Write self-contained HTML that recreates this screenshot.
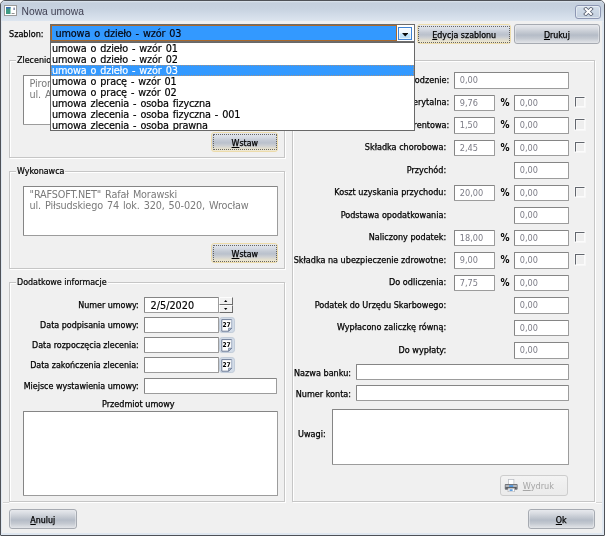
<!DOCTYPE html>
<html lang="pl">
<head>
<meta charset="utf-8">
<title>Nowa umowa</title>
<style>
*{box-sizing:border-box;margin:0;padding:0}
html,body{width:605px;height:536px;overflow:hidden;background:#fff}
body{filter:blur(.35px);position:relative;font-family:"DejaVu Sans Condensed","Liberation Sans",sans-serif;font-size:9px;color:#000}
.abs{position:absolute}
#win{position:absolute;left:0;top:0;width:605px;height:536px;background:#dfe7f0;border:1px solid #4e5157;border-width:1px 1.5px 1.8px 1.2px;border-radius:5px 5px 1px 1px;overflow:hidden}
#client{position:absolute;left:1.4px;top:19.6px;width:599.9px;height:512.4px;background:#f0f0f0}
#title{position:absolute;left:0;top:0;width:603px;height:21px;background:linear-gradient(#dde5ee 0,#c4cfdd 9%,#c8d3e1 40%,#d3dde9 70%,#dbe4ee 92%,#e9eef4 100%)}
#title .txt{position:absolute;left:20.5px;top:3.8px;font-family:"Liberation Sans",sans-serif;font-size:10.3px;color:#3e3e50;line-height:13px}
#close{position:absolute;left:573.5px;top:3.5px;width:26px;height:14px;border:1px solid #8d97b3;border-radius:3px;background:linear-gradient(#d3deea,#c3cfdf);box-shadow:inset 0 0 0 1px rgba(255,255,255,.45)}
.lbl{position:absolute;white-space:nowrap;line-height:12px;height:12px;font-size:9px;-webkit-text-stroke:.25px #000}
.r{text-align:right}
.inp{position:absolute;background:#fff;border:1px solid #8a8a8a;border-color:#858585 #9c9c9c #9c9c9c #858585;border-radius:1px;white-space:nowrap;overflow:hidden}
.val{font-family:"DejaVu Sans Condensed","Liberation Sans",sans-serif;font-size:9.1px;color:#7c7c86;line-height:15.6px;padding-left:4.8px}
.ver{font-family:"DejaVu Sans","Liberation Sans",sans-serif;font-size:9.7px;letter-spacing:-.16px;word-spacing:1.1px}
.grp{position:absolute;border:1px solid #c6c6c6;box-shadow:1px 1px 0 #fff, inset 1px 1px 0 #fff}
.grp>.cap{position:absolute;left:6px;top:-7px;background:#f0f0f0;padding:0 1px;line-height:12px;font-size:8.9px;white-space:nowrap;-webkit-text-stroke:.2px #000}
.btn{position:absolute;border:1px solid #a6aab1;border-radius:3px;background:linear-gradient(#e7e9ed 0,#d9dce2 18%,#c6cbd3 38%,#b5bcc7 56%,#c4c9d1 75%,#d9dce1 92%,#e3e5e9 100%);box-shadow:inset 1px 0 0 rgba(255,255,255,.35),inset -1px 0 0 rgba(255,255,255,.35);text-align:center;font-size:8.8px;line-height:20.4px;white-space:nowrap;color:#000;-webkit-text-stroke:.25px #000}
.btn.foc{border:1.4px solid #eddcab;box-shadow:none;background:linear-gradient(#e4e7ec 0,#d8dde5 22%,#c3c9d3 42%,#bac1cc 55%,#cfd1d3 72%,#e9e3cd 90%,#f0ead5 100%)}
.btn.foc:after{content:"";position:absolute;left:.6px;top:.6px;right:.6px;bottom:.6px;border:1px dotted #505050;opacity:.85;border-radius:1px}
.btn u{text-decoration:underline}
.btn.dis{color:#a6a6a6;-webkit-text-stroke:0;border-color:#cdcdcd;box-shadow:none;background:linear-gradient(#f3f3f3,#eeeeee 50%,#ebebeb);text-align:left}
.chk{position:absolute;width:10.4px;height:10.4px;background:#eeeeee;border:1.2px solid;border-color:#62666d #fbfbfb #fbfbfb #62666d;box-shadow:0 0 0 .8px #f9f9f9, inset 1px 1px 0 #f6f6f6}
.sb{background:#f1f1f1;border:1.2px solid;border-color:#fdfdfd #6c6c6c #6c6c6c #fdfdfd}
.cal{position:absolute;width:15.6px;height:15.6px;border-radius:3.2px;background:#d3dce8;border:1px solid #c2ccd9}
.pct{position:absolute;font-weight:bold;font-size:10px;line-height:12px}
#list{position:absolute;left:50px;top:41.6px;width:365px;height:89.6px;padding-top:.6px;background:#fff;border:1px solid #686868;z-index:10;overflow:hidden}
#list div{height:11px;line-height:12.4px;padding-left:1px;font-family:"DejaVu Sans","Liberation Sans",sans-serif;font-size:9.7px;letter-spacing:-.16px;word-spacing:1.1px;color:#000;white-space:nowrap;-webkit-text-stroke:.18px #000}
#list div.sel{position:relative;z-index:0;color:#fff;-webkit-text-stroke:.18px #fff}
#list div.sel:before{content:"";position:absolute;z-index:-1;left:0;right:0;top:.1px;height:10.4px;background:#3399ff;outline:1px dotted rgba(201,143,92,.75);outline-offset:-1px}
</style>
</head>
<body>
<div id="win">
<div id="title"><span class="txt">Nowa umowa</span></div>
<svg class="abs" style="left:3px;top:4px" width="13" height="11" viewBox="0 0 13 11"><rect x=".5" y=".5" width="12" height="10" fill="#fff" stroke="#9a9a9a"/><rect x="2" y="2" width="4.5" height="7" fill="#3f9a84"/><rect x="2" y="2" width="4.5" height="1.5" fill="#3b6fb5"/><rect x="9.6" y="2.6" width="1" height="2.4" fill="#3a4a7a"/><rect x="7.6" y="8" width="3" height=".8" fill="#777"/></svg>
<div id="close"><svg class="abs" style="left:7.3px;top:1.1px" width="11" height="9" viewBox="0 0 11 9"><path d="M2.8 2 L8 7 M8 2 L2.8 7" stroke="#596071" stroke-width="3.7" stroke-linecap="square"/><path d="M2.8 2 L8 7 M8 2 L2.8 7" stroke="#fff" stroke-width="2.1" stroke-linecap="square"/></svg></div>
<div id="client"></div>
</div>

<!-- top row -->
<div class="lbl" style="left:9px;top:27.7px">Szablon:</div>
<div class="abs" id="combo" style="left:49.8px;top:24.2px;width:365px;height:18px;border:1px solid #6c6c6c;background:#fff">
  <div class="abs ver" style="left:0;top:0;width:346.4px;height:16px;background:#3399ff;border:1.3px solid #a9682c;line-height:15.4px;padding-left:3.8px;color:#05050f;-webkit-text-stroke:.18px #05050f">umowa o dzieło - wzór 03</div>
  <div class="abs" style="left:347.2px;top:1.6px;width:14.4px;height:13.2px;border:1px solid #3f82d2;background:linear-gradient(#f6fbff 0,#eef7fe 45%,#c4e4fa 55%,#b9dff9 100%);box-shadow:inset 0 0 0 1px rgba(255,255,255,.6)"><svg class="abs" style="left:3.1px;top:5.6px" width="6.4" height="3.6" viewBox="0 0 7 4"><path d="M0 0h7L3.5 4z" fill="#0a0a0a"/></svg></div>
</div>
<div class="btn foc" style="left:416.9px;top:24.2px;width:94.6px;height:20px"><u>E</u>dycja szablonu</div>
<div class="btn" style="left:514.1px;top:24.2px;width:85.6px;height:20.2px"><u>D</u>rukuj</div>

<div id="list">
<div>umowa o dzieło - wzór 01</div>
<div>umowa o dzieło - wzór 02</div>
<div class="sel">umowa o dzieło - wzór 03</div>
<div>umowa o pracę - wzór 01</div>
<div>umowa o pracę - wzór 02</div>
<div>umowa zlecenia - osoba fizyczna</div>
<div>umowa zlecenia - osoba fizyczna - 001</div>
<div>umowa zlecenia - osoba prawna</div>
</div>

<!-- left groups -->
<div class="grp" style="left:9px;top:60px;width:276px;height:98px"><span class="cap">Zleceniodawca</span></div>
<div class="inp ver" style="left:23px;top:75px;width:255px;height:50px;color:#7a7a7a;line-height:11px;padding:2.3px 5.6px">Pironex Sp. z o.o.<br>ul. Akacjowa 12, 50-001, Wrocław</div>
<div class="btn foc" style="left:211.4px;top:132px;width:66.8px;height:20px"><u>W</u>staw</div>

<div class="grp" style="left:9px;top:171px;width:276px;height:98px"><span class="cap">Wykonawca</span></div>
<div class="inp ver" style="left:23px;top:186px;width:255px;height:50px;color:#7a7a7a;line-height:11px;padding:2.3px 5.6px">"RAFSOFT.NET" Rafał Morawski<br>ul. Piłsudskiego 74 lok. 320, 50-020, Wrocław</div>
<div class="btn foc" style="left:211.4px;top:243.3px;width:66.8px;height:20px"><u>W</u>staw</div>

<div class="grp" style="left:9px;top:282.4px;width:276px;height:219.6px"><span class="cap">Dodatkowe informacje</span></div>
<div class="lbl r" style="font-size:8.9px;left:9px;width:129.8px;top:299px">Numer umowy:</div>
<div class="inp ver" style="left:144px;top:297.3px;width:75px;height:16px;line-height:14px;padding-top:1.2px;padding-left:5.6px;color:#000;letter-spacing:0;-webkit-text-stroke:.15px #000">2/5/2020</div>
<div class="abs" id="spin" style="left:219.1px;top:297.3px;width:13.6px;height:16px">
  <div class="abs sb" style="left:0;top:0;width:13.6px;height:7.5px"><svg class="abs" style="left:4.2px;top:2px" width="3.4" height="2.2" viewBox="0 0 4 2.4"><path d="M0 2.4h4L2 0z" fill="#000"/></svg></div>
  <div class="abs sb" style="left:0;top:7.5px;width:13.6px;height:8.6px"><svg class="abs" style="left:4.2px;top:2.6px" width="3.4" height="2.2" viewBox="0 0 4 2.4"><path d="M0 0h4L2 2.4z" fill="#000"/></svg></div>
</div>
<div class="lbl r" style="font-size:8.9px;left:9px;width:129.8px;top:319px">Data podpisania umowy:</div>
<div class="inp" style="left:144px;top:317px;width:75px;height:16px"></div>
<div class="cal" style="left:219.1px;top:317.4px"><svg class="abs" style="left:1.2px;top:1px" width="12" height="13" viewBox="0 0 12 13"><path d="M.8.6H10.6V9.2L7.6 12.2H.8z" fill="#fff" stroke="#62718c" stroke-width=".9"/><path d="M10.6 9.2H7.6V12.2z" fill="#b9c4d6" stroke="#62718c" stroke-width=".7"/><path d="M10.4.8V9" stroke="#c9d2df" stroke-width=".8"/><text x="5.6" y="7.6" text-anchor="middle" font-family="DejaVu Sans Condensed,Liberation Sans,sans-serif" font-weight="bold" font-size="6.6" fill="#000">27</text></svg></div>
<div class="lbl r" style="font-size:8.9px;left:9px;width:129.8px;top:339px">Data rozpoczęcia zlecenia:</div>
<div class="inp" style="left:144px;top:337px;width:75px;height:16px"></div>
<div class="cal" style="left:219.1px;top:337.4px"><svg class="abs" style="left:1.2px;top:1px" width="12" height="13" viewBox="0 0 12 13"><path d="M.8.6H10.6V9.2L7.6 12.2H.8z" fill="#fff" stroke="#62718c" stroke-width=".9"/><path d="M10.6 9.2H7.6V12.2z" fill="#b9c4d6" stroke="#62718c" stroke-width=".7"/><path d="M10.4.8V9" stroke="#c9d2df" stroke-width=".8"/><text x="5.6" y="7.6" text-anchor="middle" font-family="DejaVu Sans Condensed,Liberation Sans,sans-serif" font-weight="bold" font-size="6.6" fill="#000">27</text></svg></div>
<div class="lbl r" style="font-size:8.9px;left:9px;width:129.8px;top:359px">Data zakończenia zlecenia:</div>
<div class="inp" style="left:144px;top:357px;width:75px;height:16px"></div>
<div class="cal" style="left:219.1px;top:357.4px"><svg class="abs" style="left:1.2px;top:1px" width="12" height="13" viewBox="0 0 12 13"><path d="M.8.6H10.6V9.2L7.6 12.2H.8z" fill="#fff" stroke="#62718c" stroke-width=".9"/><path d="M10.6 9.2H7.6V12.2z" fill="#b9c4d6" stroke="#62718c" stroke-width=".7"/><path d="M10.4.8V9" stroke="#c9d2df" stroke-width=".8"/><text x="5.6" y="7.6" text-anchor="middle" font-family="DejaVu Sans Condensed,Liberation Sans,sans-serif" font-weight="bold" font-size="6.6" fill="#000">27</text></svg></div>
<div class="lbl r" style="font-size:8.9px;left:9px;width:129.8px;top:380px">Miejsce wystawienia umowy:</div>
<div class="inp" style="left:144px;top:378px;width:133px;height:16px"></div>
<div class="lbl" style="left:102px;top:398px">Przedmiot umowy</div>
<div class="inp" style="left:22.5px;top:411px;width:255.5px;height:84.6px"></div>

<!-- right group -->
<div class="grp" style="left:292px;top:60px;width:303.2px;height:442px"></div>
<!--rows-->
<div class="lbl r" style="left:292px;width:157.3px;top:73.7px">Wynagrodzenie:</div>
<div class="inp val" style="left:454px;top:72.4px;width:115px;height:16.4px">0,00</div>
<div class="lbl r" style="left:292px;width:157.3px;top:96.2px">Składka emerytalna:</div>
<div class="inp val" style="left:454px;top:94.9px;width:41px;height:16.4px">9,76</div>
<div class="pct" style="left:500.6px;top:96.5px">%</div>
<div class="inp val" style="left:514px;top:94.9px;width:55px;height:16.4px">0,00</div>
<div class="chk" style="left:574.8px;top:96.7px"></div>
<div class="lbl r" style="left:292px;width:157.3px;top:118.7px">Składka rentowa:</div>
<div class="inp val" style="left:454px;top:117.4px;width:41px;height:16.4px">1,50</div>
<div class="pct" style="left:500.6px;top:119.0px">%</div>
<div class="inp val" style="left:514px;top:117.4px;width:55px;height:16.4px">0,00</div>
<div class="chk" style="left:574.8px;top:119.2px"></div>
<div class="lbl r" style="left:292px;width:154.2px;top:141.2px">Składka chorobowa:</div>
<div class="inp val" style="left:454px;top:139.9px;width:41px;height:16.4px">2,45</div>
<div class="pct" style="left:500.6px;top:141.5px">%</div>
<div class="inp val" style="left:514px;top:139.9px;width:55px;height:16.4px">0,00</div>
<div class="chk" style="left:574.8px;top:141.7px"></div>
<div class="lbl r" style="left:292px;width:154.2px;top:163.7px">Przychód:</div>
<div class="inp val" style="left:514px;top:162.4px;width:55px;height:16.4px">0,00</div>
<div class="lbl r" style="left:292px;width:154.2px;top:186.2px">Koszt uzyskania przychodu:</div>
<div class="inp val" style="left:454px;top:184.9px;width:41px;height:16.4px">20,00</div>
<div class="pct" style="left:500.6px;top:186.5px">%</div>
<div class="inp val" style="left:514px;top:184.9px;width:55px;height:16.4px">0,00</div>
<div class="chk" style="left:574.8px;top:186.7px"></div>
<div class="lbl r" style="left:292px;width:154.2px;top:208.7px">Podstawa opodatkowania:</div>
<div class="inp val" style="left:514px;top:207.4px;width:55px;height:16.4px">0,00</div>
<div class="lbl r" style="left:292px;width:154.2px;top:231.2px">Naliczony podatek:</div>
<div class="inp val" style="left:454px;top:229.9px;width:41px;height:16.4px">18,00</div>
<div class="pct" style="left:500.6px;top:231.5px">%</div>
<div class="inp val" style="left:514px;top:229.9px;width:55px;height:16.4px">0,00</div>
<div class="chk" style="left:574.8px;top:231.7px"></div>
<div class="lbl r" style="left:292px;width:154.2px;top:253.7px">Składka na ubezpieczenie zdrowotne:</div>
<div class="inp val" style="left:454px;top:252.4px;width:41px;height:16.4px">9,00</div>
<div class="pct" style="left:500.6px;top:254.0px">%</div>
<div class="inp val" style="left:514px;top:252.4px;width:55px;height:16.4px">0,00</div>
<div class="chk" style="left:574.8px;top:254.2px"></div>
<div class="lbl r" style="left:292px;width:154.2px;top:276.2px">Do odliczenia:</div>
<div class="inp val" style="left:454px;top:274.9px;width:41px;height:16.4px">7,75</div>
<div class="pct" style="left:500.6px;top:276.5px">%</div>
<div class="inp val" style="left:514px;top:274.9px;width:55px;height:16.4px">0,00</div>
<div class="lbl r" style="left:292px;width:154.2px;top:298.7px">Podatek do Urzędu Skarbowego:</div>
<div class="inp val" style="left:514px;top:297.4px;width:55px;height:16.4px">0,00</div>
<div class="lbl r" style="left:292px;width:154.2px;top:321.2px">Wypłacono zaliczkę równą:</div>
<div class="inp val" style="left:514px;top:319.9px;width:55px;height:16.4px">0,00</div>
<div class="lbl r" style="left:292px;width:154.2px;top:343.7px">Do wypłaty:</div>
<div class="inp val" style="left:514px;top:342.4px;width:55px;height:16.4px">0,00</div>
<!--/rows-->

<div class="lbl r" style="left:292px;width:59px;top:367px">Nazwa banku:</div>
<div class="inp" style="left:356px;top:364px;width:213px;height:16px"></div>
<div class="lbl r" style="left:292px;width:59px;top:388px">Numer konta:</div>
<div class="inp" style="left:356px;top:385px;width:213px;height:16px"></div>
<div class="lbl" style="left:298px;top:428px">Uwagi:</div>
<div class="inp" style="left:332px;top:408.5px;width:237px;height:56px"></div>
<div class="btn dis" style="left:500.2px;top:475.4px;width:67.8px;height:20.2px;font-size:9.1px"><svg class="abs" style="left:3px;top:2.4px" width="14.4" height="13.4" viewBox="0 0 15 14"><rect x="4.7" y=".5" width="5.6" height="5.5" fill="#fff" stroke="#b9bcc2" stroke-width=".8"/><rect x=".8" y="5.2" width="13.4" height="6" rx="1" fill="#6d7076"/><rect x="1.6" y="6.2" width="11.8" height="2.2" fill="#b4b7bc"/><rect x="2.6" y="8.6" width="9.8" height="1.6" fill="#4d5056"/><rect x="5.4" y="6.6" width="4.2" height="1.6" fill="#3d8fe3"/><rect x="4.2" y="9.6" width="6.6" height="3.8" fill="#fff" stroke="#a9acb2" stroke-width=".7"/><rect x="5.8" y="10.8" width="3.2" height="1.6" fill="#4a90d9"/></svg><span style="position:absolute;left:21.6px;top:0"><u>W</u>ydruk</span></div>

<!-- bottom bar -->
<div class="abs" style="left:2.6px;top:502.3px;width:6.7px;height:1px;background:#d4d4d4;box-shadow:0 1px 0 #fbfbfb"></div>
<div class="abs" style="left:596px;top:502.3px;width:6.4px;height:1px;background:#d4d4d4;box-shadow:0 1px 0 #fbfbfb"></div>
<div class="btn" style="left:9px;top:509.3px;width:67.6px;height:20px"><u>A</u>nuluj</div>
<div class="btn" style="left:527.6px;top:509.3px;width:67.2px;height:20px"><u>O</u>k</div>
</body>
</html>
